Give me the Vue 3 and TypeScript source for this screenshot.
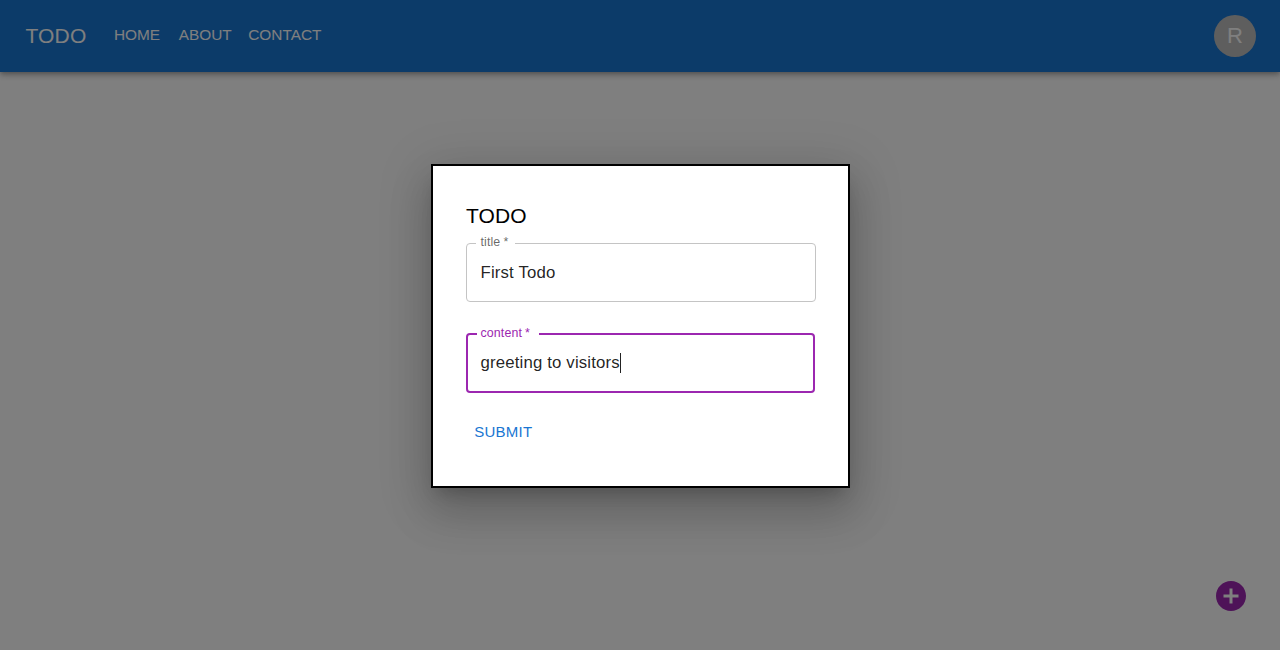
<script setup lang="ts">
import { ref } from 'vue'

interface Field {
  id: string
  label: string
  value: string
  focused: boolean
}

const pages: string[] = ['HOME', 'ABOUT', 'CONTACT']
const fields = ref<Field[]>([
  { id: 'title', label: 'title', value: 'First Todo', focused: false },
  { id: 'content', label: 'content', value: 'greeting to visitors', focused: true },
])
</script>

<template>
  <div class="page">
    <header class="bar">
      <span class="brand">TODO</span>
      <nav class="nav">
        <a v-for="page in pages" :key="page" :class="page.toLowerCase()">{{ page }}</a>
      </nav>
      <div class="avatar">R</div>
    </header>
    <svg class="add" viewBox="0 0 24 24" aria-label="Add">
      <path d="M12 2C6.48 2 2 6.48 2 12s4.48 10 10 10 10-4.48 10-10S17.52 2 12 2zm5 11h-4v4h-2v-4H7v-2h4V7h2v4h4v2z" />
    </svg>
    <div class="backdrop">
      <form class="modal" @submit.prevent>
        <h2>TODO</h2>
        <div v-for="f in fields" :key="f.id" class="field" :class="[f.id, { focused: f.focused }]">
          <label>{{ f.label }}<span class="star">*</span></label>
          <span class="value">{{ f.value }}</span><i v-if="f.focused" class="caret"></i>
        </div>
        <button type="submit">SUBMIT</button>
      </form>
    </div>
  </div>
</template>

<style>
body {
  margin: 0;
  overflow: hidden;
}
</style>

<style scoped>
.page {
  position: relative;
  height: 650px;
  overflow: hidden;
  background: #fff;
  font-family: "Liberation Sans", Arial, sans-serif;
}
.bar {
  box-sizing: border-box;
  height: 72px;
  padding: 0 24px 0 25.5px;
  display: flex;
  align-items: center;
  background: #1976d2;
  color: #fff;
  box-shadow: 0 2px 4px -1px rgba(0, 0, 0, .2), 0 4px 5px rgba(0, 0, 0, .14), 0 1px 10px rgba(0, 0, 0, .12);
}
.brand {
  width: 88.4px;
  font-size: 21px;
  letter-spacing: .16px;
}
.nav {
  display: flex;
  flex: 1;
  font-size: 15.4px;
  line-height: 24px;
  padding-bottom: 2px;
}
.about {
  margin-left: 18.6px;
}
.contact {
  margin-left: 16.5px;
}
.avatar {
  width: 42px;
  height: 42px;
  border-radius: 50%;
  background: #bdbdbd;
  color: #fff;
  display: flex;
  align-items: center;
  justify-content: center;
  font-size: 22px;
}
.add {
  position: absolute;
  left: 1213px;
  top: 578px;
  width: 36px;
  height: 36px;
  fill: #9c27b0;
}
.backdrop {
  position: absolute;
  inset: 0;
  display: flex;
  align-items: center;
  justify-content: center;
  background: rgba(0, 0, 0, .5);
}
.modal {
  box-sizing: border-box;
  width: 419px;
  height: 324px;
  margin-top: 2px;
  padding: 33px 32px 33px 33px;
  display: flex;
  flex-direction: column;
  align-items: flex-start;
  background: #fff;
  border: 2px solid #000;
  box-shadow: 0 11.5px 15.7px -7.3px rgba(0, 0, 0, .2), 0 25px 40px 3px rgba(0, 0, 0, .14), 0 9.4px 48px 8.4px rgba(0, 0, 0, .12);
}
h2 {
  margin: 0 0 0 .5px;
  height: 44px;
  line-height: 34px;
  font-size: 21px;
  font-weight: 400;
  letter-spacing: .1px;
}
.field {
  position: relative;
  box-sizing: border-box;
  width: 350px;
  height: 59px;
  display: flex;
  align-items: center;
  padding-left: 14px;
  border: 1px solid #c4c4c4;
  border-radius: 4px;
  font-size: 16.8px;
  letter-spacing: .157px;
  color: rgba(0, 0, 0, .87);
}
.focused {
  margin-top: 31px;
  width: 349.5px;
  height: 60px;
  border: 2px solid #9c27b0;
  padding-left: 13px;
}
label {
  position: absolute;
  left: 9px;
  top: -10px;
  width: 34px;
  padding-left: 5px;
  background: #fff;
  color: rgba(0, 0, 0, .6);
  font-size: 12.4px;
  line-height: 16px;
  letter-spacing: .12px;
  white-space: nowrap;
}
.focused label {
  left: 9px;
  width: 58px;
  padding-left: 4px;
  color: #9c27b0;
}
.star {
  margin-left: 3px;
}
.caret {
  width: 1px;
  height: 20px;
  background: #222;
}
button {
  margin: 20px 0 0;
  height: 38px;
  padding: 0 8.7px;
  border: 0;
  background: none;
  color: #1976d2;
  font: 15px/26px "Liberation Sans", Arial, sans-serif;
  letter-spacing: .25px;
}
</style>
